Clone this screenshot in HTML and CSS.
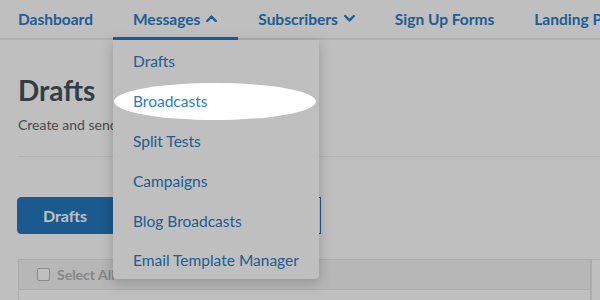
FILE: index.html
```html
<!DOCTYPE html>
<html lang="en">
<head>
  <meta charset="UTF-8" />
  <title>Drafts</title>
  <link rel="stylesheet" href="styles.css">
</head>
<body>
  <nav class="topnav">
    <a class="nav-link first">Dashboard</a>
    <a class="nav-link active">Messages
      <svg class="chev" width="11" height="7" viewBox="0 0 11 7"><polyline points="1.2,6 5.5,1.6 9.8,6" /></svg>
    </a>
    <a class="nav-link">Subscribers
      <svg class="chev" width="11" height="7" viewBox="0 0 11 7"><polyline points="1.2,1 5.5,5.4 9.8,1" /></svg>
    </a>
    <a class="nav-link">Sign Up Forms</a>
    <a class="nav-link">Landing Pages</a>
  </nav>

  <ul class="dropdown">
    <li><a>Drafts</a></li>
    <li><a>Broadcasts</a><span class="spotlight"></span></li>
    <li><a>Split Tests</a></li>
    <li><a>Campaigns</a></li>
    <li><a>Blog Broadcasts</a></li>
    <li><a>Email Template Manager</a></li>
  </ul>

  <main class="content">
    <h1>Drafts</h1>
    <p class="subtitle">Create and send emails to subscribers.</p>
    <hr class="divider">

    <div class="btn-group">
      <button class="btn primary">Drafts</button>
      <button class="btn outline">Scheduled</button>
    </div>

    <div class="table">
      <div class="th">
        <label class="select-all"><span class="checkbox"></span>Select All</label>
      </div>
      <div class="th side"></div>
      <div class="td"></div>
      <div class="td side"></div>
    </div>
  </main>
</body>
</html>
```

FILE: styles.css
```css
* {
  box-sizing: border-box;
}

body {
  margin: 0;
  font-family: Lato, "Open Sans", sans-serif;
  background: #fff;
  color: #47525b;
  overflow: hidden;
}

/* top navigation */
.topnav {
  display: flex;
  height: 40px;
  box-shadow: inset 0 -2px 0 #ebebf1;
  white-space: nowrap;
}

.nav-link {
  display: flex;
  align-items: center;
  gap: 6px;
  padding: 0 20px;
  height: 40px;
  border-bottom: 3px solid transparent;
  font-size: 15.5px;
  font-weight: 700;
  color: #2b7dc3;
}

.nav-link.first {
  padding-left: 18px;
}

.nav-link.active {
  border-bottom-color: #2b7dc3;
  padding-right: 21px;
}

.chev polyline {
  fill: none;
  stroke: #2b7dc3;
  stroke-width: 2.4;
  stroke-linecap: round;
  stroke-linejoin: round;
}

/* messages dropdown */
.dropdown {
  position: absolute;
  left: 113px;
  top: 40px;
  width: 206px;
  margin: 0;
  padding: 1px 0 0;
  list-style: none;
  background: #fff;
  border-radius: 0 0 4px 4px;
  box-shadow: 0 3px 14px rgba(0, 0, 0, 0.22);
  z-index: 5;
}

.dropdown li {
  position: relative;
  height: 40px;
  display: flex;
  align-items: center;
  padding-left: 20px;
}

.dropdown li:last-child {
  height: 38px;
}

.dropdown a {
  font-size: 15.5px;
  color: #2b7dc3;
}

/* highlight around one menu item, greys out everything else */
.spotlight {
  position: absolute;
  left: 1px;
  top: 2px;
  width: 202px;
  height: 37px;
  border-radius: 50%;
  box-shadow: 0 0 0 2000px rgba(0, 0, 0, 0.25);
  z-index: 10;
}

/* page content */
.content {
  padding: 0 0 0 18px;
}

h1 {
  margin: 33px 0 0;
  font-size: 28px;
  font-weight: 700;
  line-height: 34px;
}

.subtitle {
  margin: 9px 0 0;
  font-size: 14px;
  color: #666;
}

.divider {
  margin: 23px 0 0;
  border: none;
  border-top: 1px solid #eeeeee;
}

.btn-group {
  display: flex;
  margin-top: 40px;
  margin-left: -1px;
  width: 304px;
}

.btn {
  height: 37px;
  font-family: inherit;
  font-size: 16px;
  font-weight: 700;
  border: 1px solid #2478bf;
}

.btn.primary {
  width: 96px;
  background: #2478bf;
  color: #fff;
  border-radius: 4px 0 0 4px;
}

.btn.outline {
  flex: 1;
  background: #fff;
  color: #2478bf;
  border-left: none;
  border-radius: 0;
}

.table {
  display: grid;
  grid-template-columns: 572px 1fr;
  margin-top: 25px;
  border-top: 1px solid #e6e6e6;
}

.th {
  height: 30px;
  background: #f4f4f4;
  border-left: 1px solid #e6e6e6;
  border-bottom: 1px solid #e6e6e6;
  display: flex;
  align-items: center;
  padding-left: 18px;
}

.th.side,
.td.side {
  background: #fff;
  border-left: 2px solid #e6e6e6;
  border-bottom: none;
}

.td {
  height: 40px;
  border-left: 1px solid #e6e6e6;
}

.select-all {
  display: flex;
  align-items: center;
  gap: 7px;
  font-size: 14px;
  font-weight: 700;
  color: #b3b3b3;
}

.checkbox {
  width: 13px;
  height: 13px;
  border: 1px solid #b8b8b8;
  border-radius: 2px;
  background: #fff;
}
```
